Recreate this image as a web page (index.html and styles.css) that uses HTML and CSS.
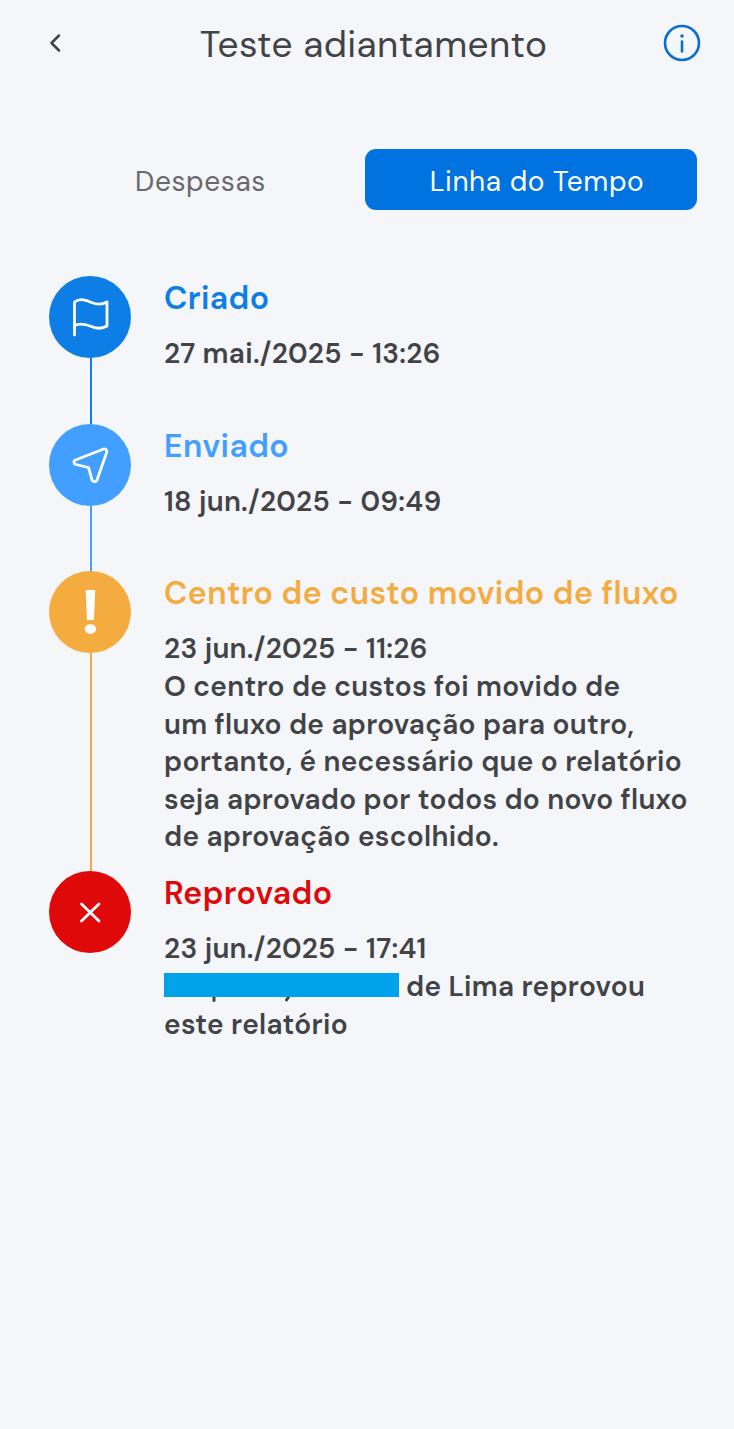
FILE: index.html
```
<!DOCTYPE html>
<html lang="pt-BR">
<head>
  <meta charset="utf-8">
  <title>Teste adiantamento</title>
  <link rel="stylesheet" href="styles.css">
</head>
<body>
  <header class="header">
    <svg class="back" viewBox="0 0 20 24"><path d="M14 4.500 6.500 12 14 19.500"/></svg>
    <h1>Teste adiantamento</h1>
    <svg class="info" viewBox="0 0 38 38">
      <circle cx="19" cy="19" r="17"/>
      <path d="M19 17.500v10"/>
      <circle class="dot" cx="19" cy="12" r="1.800"/>
    </svg>
  </header>

  <nav class="tabs">
    <a class="tab">Despesas</a>
    <a class="tab active">Linha do Tempo</a>
  </nav>

  <main class="timeline">
    <section class="item created">
      <div class="rail">
        <div class="circle">
          <svg viewBox="0 0 82 82"><path d="M25.500 59V26c5-4 11-2.500 17 .5 6 2.500 10.500 2.300 15.500-.5v24c-5 3-9.500 3.200-15.500 .5-6-2.500-12-3.500-17-1"/></svg>
        </div>
        <div class="line"></div>
      </div>
      <div class="content">
        <h2>Criado</h2>
        <p>27 mai./2025 - 13:26</p>
      </div>
    </section>

    <section class="item sent">
      <div class="rail">
        <div class="circle">
          <svg viewBox="0 0 82 82"><path d="M26.500 36 54 25.200c2.500-.9 4.300.8 3.700 3.200L48 56c-.8 2.400-4.300 2.200-5-.2L39.500 43.500 27 40.500c-2.600-.7-2.700-3.700-.5-4.500z"/></svg>
        </div>
        <div class="line"></div>
      </div>
      <div class="content">
        <h2>Enviado</h2>
        <p>18 jun./2025 - 09:49</p>
      </div>
    </section>

    <section class="item moved">
      <div class="rail">
        <div class="circle">
          <svg class="solid" viewBox="0 0 82 82"><path d="M36.700 19h9.500l-1.200 30h-7.100z"/><ellipse cx="41.400" cy="58" rx="5.700" ry="4.800"/></svg>
        </div>
        <div class="line"></div>
      </div>
      <div class="content">
        <h2>Centro de custo movido de fluxo</h2>
        <p>23 jun./2025 - 11:26<br>
          O centro de custos foi movido de<br>
          um fluxo de aprovação para outro,<br>
          portanto, é necessário que o relatório<br>
          seja aprovado por todos do novo fluxo<br>
          de aprovação escolhido.</p>
      </div>
    </section>

    <section class="item rejected">
      <div class="rail">
        <div class="circle">
          <svg viewBox="0 0 82 82"><path d="m32.500 33 17.500 17M50 33 32.500 50"/></svg>
        </div>
      </div>
      <div class="content">
        <h2>Reprovado</h2>
        <p>23 jun./2025 - 17:41<br>
          <svg class="redacted" viewBox="0 0 235 29"><path class="mark" d="M50 20v7.500M127 20l-4.500 7"/><path class="bar" d="M0 0h235v24H0z"/></svg>de Lima reprovou<br>
          este relatório</p>
      </div>
    </section>
  </main>
</body>
</html>
```
FILE: styles.css
```
* {
  box-sizing: border-box;
}

body {
  margin: 0;
  min-height: 1429px;
  background-color: #f4f6fa;
  color: #414347;
  font-family: "DM Sans", Inter, sans-serif;
}

h1, h2, p {
  margin: 0;
}

svg {
  fill: none;
  stroke: currentColor;
  stroke-linecap: round;
  stroke-linejoin: round;
}

.header {
  display: flex;
  align-items: center;
  justify-content: space-between;
  height: 86px;
  padding: 0 33px 0 45px;
}

.header h1 {
  padding: 1px 0 0 19px;
  font-size: 37px;
  font-weight: 450;
  letter-spacing: .4px;
}

.back {
  width: 20px;
  height: 24px;
  stroke-width: 2.500;
}

.info {
  width: 38px;
  height: 38px;
  color: #0a70cf;
  stroke-width: 2.600;
}

.info .dot {
  fill: currentColor;
  stroke: none;
}

.tabs {
  display: flex;
  height: 61px;
  margin: 63px 37px 0 36px;
}

.tab {
  display: flex;
  align-items: center;
  justify-content: center;
  width: 329px;
  padding-top: 3px;
  border-radius: 11px;
  color: #68696d;
  font-size: 28px;
  font-weight: 450;
  letter-spacing: .6px;
}

.tab.active {
  width: 332px;
  padding-left: 12px;
  background-color: #0073e1;
  color: white;
}

.timeline {
  margin: 66px 30px 0 49px;
}

.item {
  display: flex;
  gap: 33px;
  min-height: 147.700px;
}

.rail {
  display: flex;
  flex-direction: column;
  align-items: center;
  width: 82px;
}

.circle {
  width: 82px;
  height: 82px;
  border-radius: 50%;
  background-color: var(--color);
  color: white;
}

.circle svg {
  display: block;
  stroke-width: 2.800;
}

.circle .solid {
  fill: currentColor;
  stroke: none;
}

.line {
  flex: 1;
  width: 2px;
  margin-left: 1px;
  background-color: var(--color);
}

.created { --color: #0d7ee6; }
.sent { --color: #429fff; }
.moved { --color: #f4ab3f; height: 300px; }
.rejected { --color: #e00909; }

.content {
  flex: 1;
  white-space: nowrap;
}

.content h2 {
  height: 59px;
  color: var(--color);
  font-size: 32px;
  font-weight: 600;
  letter-spacing: .42px;
  line-height: 44px;
}

.content p {
  font-size: 28px;
  font-weight: 600;
  letter-spacing: .3px;
  line-height: 37.600px;
}

.redacted {
  width: 235px;
  height: 29px;
  margin-right: 7px;
  vertical-align: -6px;
}

.redacted .mark {
  stroke-width: 3;
}

.redacted .bar {
  fill: #00a2e9;
  stroke: none;
}
```
